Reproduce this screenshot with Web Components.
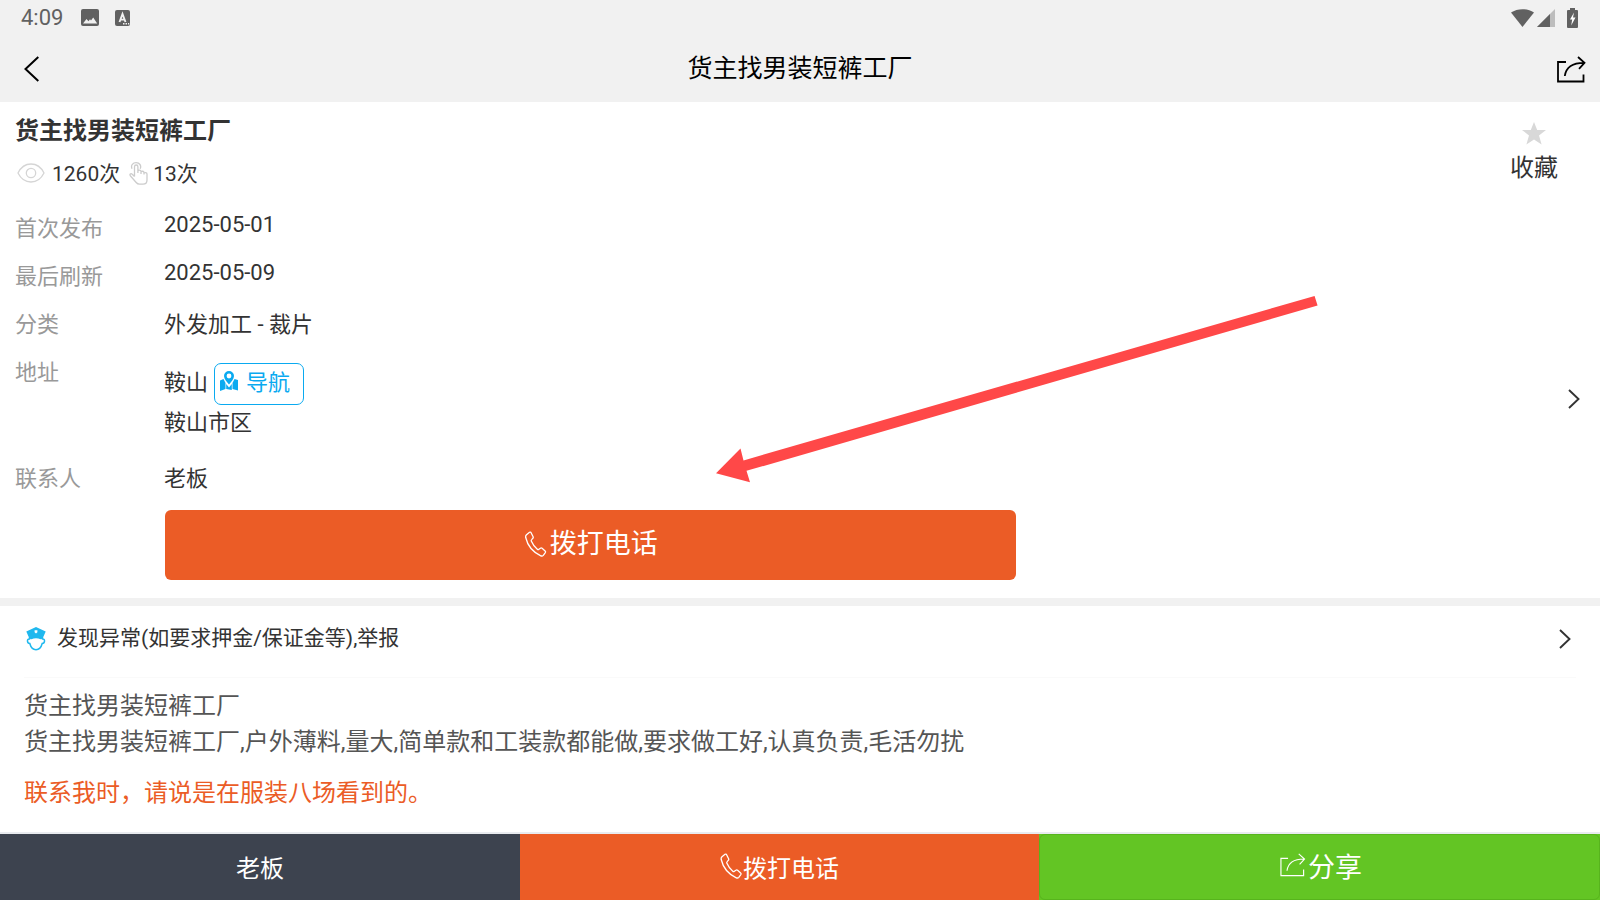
<!DOCTYPE html>
<html lang="zh-CN">
<head>
<meta charset="utf-8">
<meta name="viewport" content="width=device-width, initial-scale=1">
<title>货主找男装短裤工厂</title>
<style>
  html, body { margin: 0; }
  body { font-family: Roboto, "Noto Sans CJK SC", sans-serif; color: #333; background: #fff; }
</style>
</head>
<body>
<job-page></job-page>
<script>
const ICONS = {
  image: ['0 0 18 18', '<path fill="currentColor" d="M2 0h14a2 2 0 0 1 2 2v13a2 2 0 0 1-2 2H2a2 2 0 0 1-2-2V2a2 2 0 0 1 2-2z"/><path fill="#f1f1f1" d="M2 14.500l3.500-4.500 2 2.200 1.500-2 1 1.300 2.200-3 4 6z"/>'],
  keyboard: ['0 0 15 16', '<rect width="15" height="16" rx="2" fill="currentColor"/><path d="M4.500 12L7.500 4l3 8M5.500 9.600h4" fill="none" stroke="#f1f1f1" stroke-width="1.900"/><path fill="#f1f1f1" d="M8 13h1.500v1.500H8zM10.500 13H12v1.500h-1.500zM13 13h1.200v1.500H13z"/>'],
  wifi: ['0 0 23 18', '<path fill="currentColor" d="M0 3.500C6.500-1 16.500-1 23 3.500L11.500 18z"/>'],
  signal: ['0 0 18 18', '<path fill="#bdbdbd" d="M18 0v18H0z"/><path fill="currentColor" d="M13 5v13H0z"/>'],
  battery: ['0 0 11 20', '<path fill="currentColor" d="M3 0h5v2h2a1 1 0 0 1 1 1v16a1 1 0 0 1-1 1H1a1 1 0 0 1-1-1V3a1 1 0 0 1 1-1h2z"/><path fill="#fff" d="M7 4.500L3 11.500h2.200L4.200 17.500 8.500 9.500H6z"/>'],
  back: ['0 0 16 26', '<path d="M14.300 1L1.500 13l12.800 12" fill="none" stroke="currentColor" stroke-width="2"/>'],
  next: ['0 0 12 20', '<path d="M1 1l9.500 9L1 19" fill="none" stroke="currentColor" stroke-width="1.900"/>'],
  share: ['0 0 30 27', '<path d="M10 6H2v19.500h25.500V18.500M8.800 20C10 11 17 6.800 28 6.800M22 1l6.500 5.800-5.500 6" fill="none" stroke="currentColor" stroke-width="var(--stroke, 1.800)"/>'],
  star: ['0 0 24 23', '<path fill="currentColor" d="M12 0l3.200 8H24l-7 5.400 2.600 9.100L12 17.500l-7.600 5L7 13.400 0 8h8.800z"/>'],
  eye: ['0 0 28 20', '<path d="M1 10C4 4 8.500 1 14 1s10 3 13 9c-3 6-7.500 9-13 9S4 16 1 10z" fill="none" stroke="currentColor" stroke-width="1.300"/><circle cx="14" cy="10" r="4.700" fill="none" stroke="currentColor" stroke-width="1.300"/>'],
  tap: ['0 0 19 23', '<path d="M5.500 14.500V4.700a1.700 1.700 0 0 1 3.400 0V11M8.900 10.500V9.300c0-1.700 3.100-1.700 3.100 0V12M12 10.500c0-1.700 3-1.700 3 .2v1.800M15 11.700c0-1.700 3-1.500 3 .3V18c0 2.800-1.600 4.200-4 4.200h-3.500c-1.600 0-2.400-.6-3.300-1.700L1.500 14c-1.300-1.600.3-3 1.700-1.800l2.300 2.300M3 6.700C1.500 3 4 .7 7.200.7s5.500 2.800 4 6" fill="none" stroke="currentColor" stroke-width="1.300" stroke-linejoin="round"/>'],
  map: ['0 0 18 20', '<path fill="currentColor" fill-rule="evenodd" d="M9 0a5 5 0 0 1 5 5c0 3-3 6-5 8.500C7 11 4 8 4 5a5 5 0 0 1 5-5zm0 2.600a2.400 2.400 0 1 0 0 4.800 2.400 2.400 0 0 0 0-4.800z"/><path fill="currentColor" d="M0 9.500L3.500 8 5.500 12v6L0 20zM6.200 13L9 16.500l2.800-3.500v6l-5.600-1zM12.500 12l2-4L18 9v10.500L12.500 18z"/>'],
  police: ['0 0 20 24', '<path fill="currentColor" fill-rule="evenodd" d="M10 0l9.700 4.500-2.200 5H2.500l-2.200-5zM8.600 3.300v2L10 6.600l1.400-1.300v-2z"/><path d="M3.500 8.500v3.500c-3-.3-2.500 4.300.3 4.500 1 3.800 3.500 6.200 6.200 6.200s5.200-2.400 6.200-6.200c2.800-.2 3.300-4.800.3-4.500V8.500" fill="none" stroke="currentColor" stroke-width="1.500"/><path fill="currentColor" d="M3 8h14v3.500l-2.500.8C12 10.800 8 10.800 5.500 12.300L3 11.500z"/>'],
  phone: ['0 0 22 26', '<path d="M2 3.800L5 1.300c.6-.4 1.200-.2 1.600.5l2 4c.3.700.1 1.200-.4 1.600L7.200 8.600c-.5.500-.6 1-.3 1.600 1.300 3 3.400 5.900 5.900 8 .5.500 1.100.4 1.600 0l1.500-1c.6-.4 1.200-.3 1.700.1l3 2.600c.5.500.6 1.100.2 1.700l-2 2.700c-.6.700-1.500.9-2.500.5C8.800 21.300 3 14.300 1.200 6.500c-.2-1.100 0-2 .8-2.700z" fill="none" stroke="currentColor" stroke-width="1.300"/>']
};

const define = (name, html, setup) => {
  const template = document.createElement('template');
  template.innerHTML = html;
  customElements.define(name, class extends HTMLElement {
    constructor() {
      super();
      this.attachShadow({ mode: 'open' }).append(template.content.cloneNode(true));
    }
    connectedCallback() { if (setup) setup(this, this.shadowRoot); }
  });
};

define('ui-icon', `<style>
  :host { display: inline-block; flex: none; width: 20px; height: 20px; }
  svg { display: block; width: 100%; height: 100%; }
</style><svg aria-hidden="true"></svg>`, (host, root) => {
  const [box, body] = ICONS[host.getAttribute('name')];
  const svg = root.querySelector('svg');
  svg.setAttribute('viewBox', box);
  svg.innerHTML = body;
});

define('status-bar', `<style>
  :host { display: flex; align-items: center; height: 36px; padding: 0 22px 0 21px; background: #f1f1f1; color: #616161; font-size: 22px; line-height: 36px; }
  .image { width: 18px; height: 18px; margin-left: 18px; }
  .keyboard { width: 15px; height: 16px; margin-left: 16px; }
  .wifi { width: 23px; height: 18px; margin-left: auto; }
  .signal { width: 18px; height: 18px; margin-left: 3px; }
  .battery { width: 11px; height: 20px; margin-left: 12px; }
</style>
<span>4:09</span>
<ui-icon class="image" name="image"></ui-icon>
<ui-icon class="keyboard" name="keyboard"></ui-icon>
<ui-icon class="wifi" name="wifi"></ui-icon>
<ui-icon class="signal" name="signal"></ui-icon>
<ui-icon class="battery" name="battery"></ui-icon>`);

define('title-bar', `<style>
  :host { display: grid; grid-template-columns: 40px 1fr 40px; align-items: center; height: 66px; padding: 0 14px; background: #f1f1f1; color: #000; }
  h1 { margin: 0; text-align: center; font-size: 25px; line-height: 66px; font-weight: 400; }
  button { display: flex; padding: 0; border: 0; background: none; color: inherit; }
  button:first-child, .left { padding-left: 10px; }
  .right { justify-content: flex-end; }
  .back { width: 16px; height: 26px; }
  .share { width: 30px; height: 27px; }
</style>
<button type="button" class="left" aria-label="返回"><ui-icon class="back" name="back"></ui-icon></button>
<h1><slot></slot></h1>
<button type="button" class="right" aria-label="分享"><ui-icon class="share" name="share"></ui-icon></button>`);

define('job-heading', `<style>
  :host { display: flex; justify-content: space-between; height: 103px; padding: 0 42px 0 15px; }
  h2 { margin: 0; padding-top: 9px; font-size: 24px; line-height: 40px; font-weight: 700; }
  .counts { display: flex; align-items: center; font-size: 21px; line-height: 46px; }
  .eye { width: 28px; height: 20px; margin: 0 7px 2px 2px; color: #d5d5d5; }
  .tap { width: 19px; height: 23px; margin: 0 5px 2px 9px; color: #ccc; }
  button { display: flex; flex-direction: column; align-items: center; gap: 3px; padding: 20px 0 0; border: 0; background: none; font: inherit; font-size: 24px; line-height: 40px; color: inherit; }
  .star { width: 24px; height: 23px; color: #d8d8d8; }
</style>
<div>
  <h2><slot></slot></h2>
  <div class="counts"><ui-icon class="eye" name="eye"></ui-icon><span>1260次</span><ui-icon class="tap" name="tap"></ui-icon><span>13次</span></div>
</div>
<button type="button"><ui-icon class="star" name="star"></ui-icon><span>收藏</span></button>`);

define('info-row', `<style>
  :host { display: grid; grid-template-columns: 149px 1fr; font-size: 22px; line-height: 48px; }
  .label { color: #999; }
  :host([kind="date"]) .value { line-height: 40px; }
  :host([kind="address"]) .value { line-height: 40px; padding: 14px 0 12px; }
</style>
<div class="label"></div><div class="value"><slot></slot></div>`, (host, root) => {
  root.querySelector('.label').textContent = host.getAttribute('label');
});

define('nav-link', `<style>
  :host { display: inline-flex; vertical-align: top; margin: 0 0 -2px 6px; }
  a { display: flex; box-sizing: border-box; height: 42px; padding: 0 13px 0 5px; border: 1px solid #0aaaf0; border-radius: 7px; color: #0aaaf0; text-decoration: none; line-height: 38px; }
  ui-icon { width: 18px; height: 20px; margin: 7px 8px 0 0; }
</style><a href="#map"><ui-icon name="map"></ui-icon><slot></slot></a>`);

define('call-button', `<style>
  :host { display: block; }
  button { display: flex; align-items: center; justify-content: center; gap: 3px; width: 60%; height: 70px; padding: 0 0 8px; border: 0; border-radius: 6px; background: #eb5c26; color: #fff; font: inherit; font-size: 27px; }
  ui-icon { width: 23px; height: 26px; margin-top: 6px; }
</style><button type="button"><ui-icon name="phone"></ui-icon><slot></slot></button>`);

define('job-details', `<style>
  :host { display: grid; grid-template-columns: 1fr; align-items: center; padding: 0 16px 18px 15px; border-bottom: 8px solid #f1f1f1; }
  .rows, a { grid-area: 1 / 1; }
  call-button { margin: 7px 0 0 150px; }
  a { display: flex; justify-self: end; width: 12px; margin: 12px 4px 0 0; color: #333; }
  ui-icon { width: 12px; height: 20px; }
</style>
<div class="rows">
  <info-row label="首次发布" kind="date">2025-05-01</info-row>
  <info-row label="最后刷新" kind="date">2025-05-09</info-row>
  <info-row label="分类">外发加工 - 裁片</info-row>
  <info-row label="地址" kind="address">鞍山<nav-link>导航</nav-link><br>鞍山市区</info-row>
  <info-row label="联系人">老板</info-row>
  <call-button>拨打电话</call-button>
</div>
<a href="#address" aria-label="查看地址"><ui-icon name="next"></ui-icon></a>`);

define('report-link', `<style>
  :host { display: block; margin: 0 24px; border-bottom: 1px solid #fafafa; }
  a { display: flex; align-items: center; height: 66px; padding-bottom: 5px; color: #333; font-size: 21px; text-decoration: none; }
  .text { padding-bottom: 6px; }
  .police { width: 20px; height: 24px; margin: 0 11px 0 2px; color: #1fb8ee; }
  .next { width: 12px; height: 20px; margin: 0 5px 0 auto; }
</style><a href="#report"><ui-icon class="police" name="police"></ui-icon><span class="text"><slot></slot></span><ui-icon class="next" name="next"></ui-icon></a>`);

define('job-text', `<style>
  :host { display: block; padding: 10px 24px 0; font-size: 24px; line-height: 36px; color: #555; }
  p { margin: 0; }
  .note { margin-top: 15px; color: #eb5c26; }
</style>
<p>货主找男装短裤工厂</p>
<p>货主找男装短裤工厂,户外薄料,量大,简单款和工装款都能做,要求做工好,认真负责,毛活勿扰</p>
<p class="note">联系我时，请说是在服装八场看到的。</p>`);

define('action-bar', `<style>
  :host { display: grid; grid-template-columns: 520fr 519fr 561fr; height: 66px; border-top: 2px solid #e9ebef; color: #fff; font-size: 24px; background: #63c524; }
  button { display: flex; align-items: center; justify-content: center; min-width: 0; padding: 0 0 2px; border: 0; font: inherit; color: inherit; }
  .owner { background: #3d434f; }
  .call { background: #eb5c26; gap: 1px; }
  .share { background: #63c524; border: 1px solid #57b41d; border-radius: 6px; font-size: 27px; gap: 2px; padding: 0 0 4px 2px; }
  .phone { width: 22px; height: 26px; }
  .out { width: 27px; height: 24px; --stroke: 1.300; }
</style>
<button type="button" class="owner">老板</button>
<button type="button" class="call"><ui-icon class="phone" name="phone"></ui-icon>拨打电话</button>
<button type="button" class="share"><ui-icon class="out" name="share"></ui-icon>分享</button>`);

define('pointer-arrow', `<style>
  :host { position: absolute; left: 44.75%; top: 296px; width: 37.600%; pointer-events: none; }
  svg { display: block; width: 100%; }
</style><svg viewBox="0 0 602 188" aria-hidden="true"><path fill="#ff4848" d="M0 177.500L24.500 152.500 27.500 164.500 599 0 602 9.500 30.500 175 34 186.500z"/></svg>`);

define('job-page', `<style>
  :host { display: flex; flex-direction: column; position: relative; min-height: 100vh; }
  main { flex: 1; }
  action-bar { position: sticky; bottom: 0; }
</style>
<status-bar></status-bar>
<title-bar>货主找男装短裤工厂</title-bar>
<main>
  <job-heading>货主找男装短裤工厂</job-heading>
  <job-details></job-details>
  <report-link>发现异常(如要求押金/保证金等),举报</report-link>
  <job-text></job-text>
</main>
<action-bar></action-bar>
<pointer-arrow></pointer-arrow>`);
</script>
</body>
</html>
